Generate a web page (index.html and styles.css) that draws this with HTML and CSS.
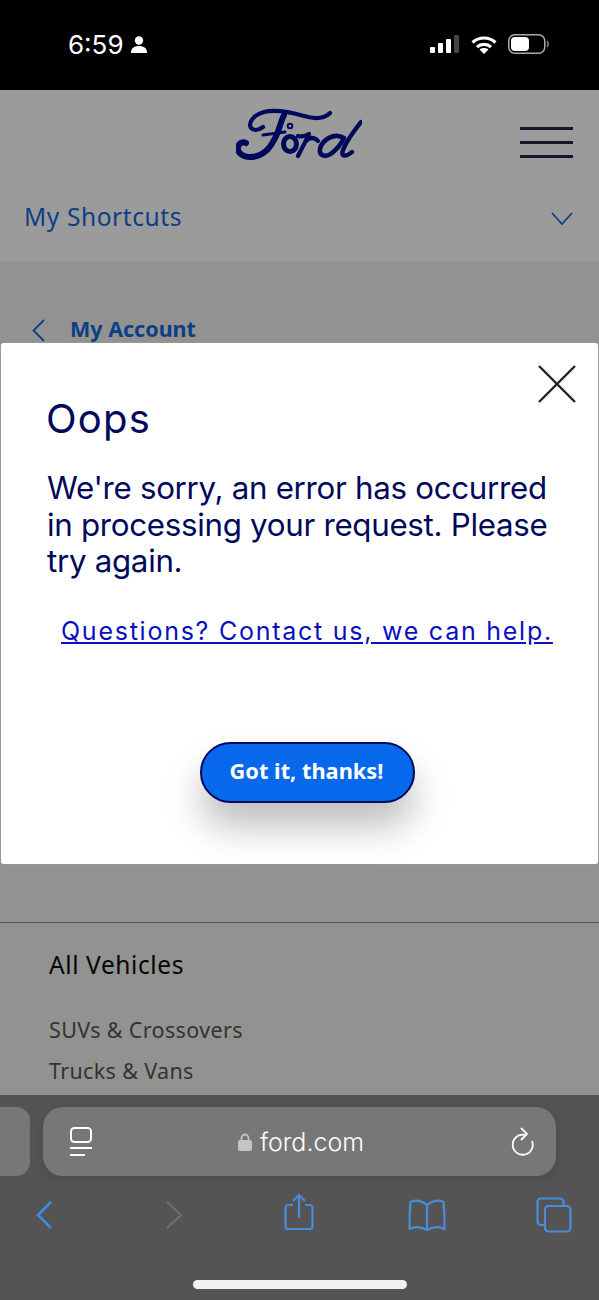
FILE: index.html
```html
<!DOCTYPE html>
<html lang="en">
<head>
<meta charset="utf-8">
<title>Ford - Oops</title>
<link rel="stylesheet" href="styles.css">
</head>
<body>
<div class="phone">
  <div class="status">
    <div class="status-left">
      <span class="time">6:59</span>
      <svg class="person" viewBox="0 0 16 17"><circle cx="8" cy="4.500" r="4.200" fill="#fff"/><path d="M0 17c0-5 3-7 8-7s8 2 8 7z" fill="#fff"/></svg>
    </div>
    <div class="status-right">
      <svg class="signal" viewBox="0 0 29 18"><rect x="0" y="12" width="5" height="6" rx="1" fill="#fff"/><rect x="8" y="8" width="5" height="10" rx="1" fill="#fff"/><rect x="16" y="4" width="5" height="14" rx="1" fill="#fff"/><rect x="24" y="0" width="5" height="18" rx="1" fill="#444"/></svg>
      <svg class="wifi" viewBox="0 0 26 19" fill="none" stroke="#fff" stroke-width="3.200"><path d="M1.500 7.500c6.500-6 16.500-6 23 0"/><path d="M6 12c4-3.600 10-3.600 14 0"/><path d="M13 19l-4.500-4.500c2.500-2 6.500-2 9 0z" fill="#fff" stroke="none"/></svg>
      <svg class="battery" viewBox="0 0 41 20" fill="none"><rect x="0.750" y="0.750" width="36" height="18.500" rx="6" stroke="#aaa" stroke-width="1.500"/><rect x="3" y="3" width="18" height="14" rx="4" fill="#fff"/><path d="M39 7c1.500 1 1.500 5 0 6" stroke="#888" stroke-width="1.500"/></svg>
    </div>
  </div>

  <header class="site-header">
    <div class="logo-row">
      <svg class="ford-logo" viewBox="0 0 126 52" fill="none" stroke="#00095b" stroke-linecap="round" stroke-linejoin="round" aria-label="Ford">
        <path d="M94 5C88 11 78 11 68 8 54 4 40 1 28 4 17 7 12 15 15 20c3 3 8 2 12-1" stroke-width="4.200"/>
        <path d="M48 7C44 15 43 24 38 32 33 42 25 49 14 49 6 49 1 44 2 39c1-4 5-6 8-4" stroke-width="6"/>
        <path d="M27 27c7-1 15-2 22-3" stroke-width="3"/>
        <ellipse cx="54" cy="36" rx="6.500" ry="7.500" stroke-width="5"/>
        <circle cx="54" cy="18" r="2.300" stroke-width="2"/>
        <path d="M62 28c4 1 8 0 11-2-3 7-7 14-11 22M70 33c4-4 8-4 12 0" stroke-width="4.200"/>
        <path d="M108 30C98 24 86 32 84 41c-1 7 6 9 12 4 5-4 9-9 12-15z" stroke-width="4.600"/>
        <path d="M125 14c-8 10-15 20-18 28-2 6 1 8 9 2" stroke-width="4.400"/>
      </svg>
      <div class="burger"><span></span><span></span><span></span></div>
    </div>
    <div class="shortcuts">
      <span>My Shortcuts</span>
      <svg class="chev-down" viewBox="0 0 22 13" fill="none" stroke="#0d3f85" stroke-width="1.800"><path d="M1 1l10 11L21 1"/></svg>
    </div>
  </header>

  <main class="page">
    <div class="crumb">
      <svg class="chev-left" viewBox="0 0 13 23" fill="none" stroke="#0d3f85" stroke-width="1.800"><path d="M12 1L1.500 11.500 12 22"/></svg>
      <span>My Account</span>
    </div>
    <div class="spacer"></div>
    <section class="foot-links">
      <h2>All Vehicles</h2>
      <a>SUVs &amp; Crossovers</a>
      <a>Trucks &amp; Vans</a>
    </section>
  </main>

  <footer class="safari">
    <div class="tabs">
      <div class="tab-peek"></div>
      <div class="urlbar">
        <svg class="reader" viewBox="0 0 24 30" fill="none" stroke="#fff" stroke-width="2"><rect x="2" y="1" width="20" height="14" rx="3.500"/><path d="M1 21h22M1 28h15"/></svg>
        <div class="url"><svg class="lock" viewBox="0 0 14 18"><path d="M3.500 8V5a3.500 3.500 0 0 1 7 0v3" fill="none" stroke="#c4c4c6" stroke-width="1.800"/><rect y="7" width="14" height="11" rx="2" fill="#c4c4c6"/></svg><span>ford.com</span></div>
        <svg class="reload" viewBox="0 0 24 30" fill="none" stroke="#fff" stroke-width="1.800"><path d="M14 8A10 10 0 1 0 21 14"/><path d="M10 1l6 6-6 6"/></svg>
      </div>
    </div>
    <div class="tools">
      <svg class="t-back" viewBox="0 0 18 30" fill="none" stroke="#3e8ae6" stroke-width="2.600"><path d="M16 2L3 15l13 13"/></svg>
      <svg class="t-fwd" viewBox="0 0 18 30" fill="none" stroke="#6c6c6c" stroke-width="2.400"><path d="M2 2l14 13L2 28"/></svg>
      <svg class="t-share" viewBox="0 0 30 38" fill="none" stroke="#4a8bdc" stroke-width="2.200"><path d="M9 12H4a2.500 2.500 0 0 0-2.500 2.500v19A2.500 2.500 0 0 0 4 36h22a2.500 2.500 0 0 0 2.500-2.500v-19A2.500 2.500 0 0 0 26 12h-5"/><path d="M15 25V2M9 8l6-6 6 6"/></svg>
      <svg class="t-book" viewBox="0 0 38 32" fill="none" stroke="#4a8bdc" stroke-width="2.200" stroke-linejoin="round"><path d="M19 6C15 2 7 0 2.500 3 1.500 12 1.500 21 1.500 30c6-3 12-2 17.500 1 5.500-3 11.500-4 17.500-1 0-9 0-18-1-27C31 0 23 2 19 6zM19 6v25"/></svg>
      <svg class="t-tabs" viewBox="0 0 36 36" fill="none" stroke="#4a8bdc" stroke-width="2.200"><path d="M9 28H5a3.500 3.500 0 0 1-3.500-3.500V5A3.500 3.500 0 0 1 5 1.500h19A3.500 3.500 0 0 1 27.500 5v4"/><rect x="9" y="9" width="25.500" height="25.500" rx="3.500"/></svg>
    </div>
    <div class="home-bar"></div>
  </footer>

  <div class="modal">
    <button class="close" aria-label="Close"><svg viewBox="0 0 38 38" fill="none" stroke="#222" stroke-width="2.400"><path d="M1 1l36 36M37 1L1 37"/></svg></button>
    <h1>Oops</h1>
    <p>We're sorry, an error has occurred in processing your request. Please try again.</p>
    <a class="help">Questions? Contact us, we can help.</a>
    <button class="cta">Got it, thanks!</button>
  </div>
</div>
</body>
</html>
```
FILE: styles.css
```css
* { box-sizing: border-box; }
html, body { margin: 0; padding: 0; }
body { font-family: "Noto Sans", "Open Sans", sans-serif; background: #000; }
.phone { position: relative; width: 599px; height: 1300px; display: flex; flex-direction: column; overflow: hidden; background: #929291; }

.status { height: 90px; flex: none; background: #000; display: flex; justify-content: space-between; align-items: flex-start; padding: 27px 50px 0 68px; color: #fff; }
.status-left { display: flex; align-items: center; gap: 7px; height: 34px; }
.time { font-family: "Inter", "Liberation Sans", sans-serif; font-size: 26px; font-weight: 400; }
.person { width: 16px; height: 17px; margin-top: 1px; }
.status-right { display: flex; align-items: center; height: 34px; }
.signal { width: 29px; height: 18px; }
.wifi { width: 26px; height: 19px; margin-left: 12px; }
.battery { width: 41px; height: 20px; margin-left: 11px; }

.site-header { flex: none; height: 173px; background: #9b9b9b; border-bottom: 1px solid #8e8e8e; }
.logo-row { position: relative; height: 90px; display: flex; justify-content: center; padding: 18px 2px 0 0; }
.ford-logo { width: 126px; height: 52px; }
.burger { position: absolute; top: 37px; right: 26px; width: 53px; display: flex; flex-direction: column; gap: 11px; }
.burger span { display: block; height: 3px; background: #17172a; }
.shortcuts { display: flex; justify-content: space-between; align-items: center; padding: 20px 26px 0 24px; font-size: 24.500px; letter-spacing: .6px; color: #0d3f85; line-height: 34px; }
.chev-down { width: 22px; height: 13px; margin-top: 2px; }

.page { flex: 1; min-height: 0; overflow: hidden; display: flex; flex-direction: column; }
.crumb { display: flex; flex: none; align-items: center; padding: 51px 0 0 32px; font-size: 21.500px; font-weight: 700; color: #0d3f85; line-height: 30px; }
.chev-left { width: 13px; height: 23px; margin-right: 25px; margin-top: 2px; }
.spacer { height: 578px; flex: none; }
.foot-links { flex: none; border-top: 1px solid #555; padding: 25px 0 0 49px; display: flex; flex-direction: column; }
.foot-links h2 { margin: 0 0 33px; font-size: 24.500px; font-weight: 400; letter-spacing: .6px; line-height: 34px; color: #050505; }
.foot-links a { font-size: 21.500px; letter-spacing: .35px; line-height: 30px; color: #333; margin-bottom: 11px; }

.safari { flex: none; height: 205px; background: #545454; display: flex; flex-direction: column; overflow: hidden; }
.tabs { display: flex; gap: 13px; padding-top: 12px; height: 81px; flex: none; }
.tab-peek { width: 30px; height: 69px; background: #777; border-radius: 0 14px 14px 0; }
.urlbar { width: 513px; height: 69px; background: #777; border-radius: 20px; display: flex; align-items: center; justify-content: space-between; padding: 0 21px 0 26px; box-shadow: 0 2px 14px rgba(0,0,0,.12); }
.reader { width: 24px; height: 30px; }
.url { display: flex; align-items: center; gap: 8px; font-size: 25px; color: #fff; font-family: "Inter", "Liberation Sans", sans-serif; font-weight: 300; margin-left: -2px; }
.lock { width: 14px; height: 18px; }
.reload { width: 24px; height: 30px; }
.tools { height: 72px; flex: none; display: flex; align-items: center; padding: 6px 0 0 35px; }
.t-back, .t-fwd { width: 18px; height: 30px; }
.t-fwd { margin-left: 112px; }
.t-share { width: 30px; height: 38px; margin-left: 101px; margin-top: -6px; }
.t-book { width: 38px; height: 32px; margin-left: 94px; }
.t-tabs { width: 36px; height: 36px; margin-left: 90px; }
.home-bar { width: 214px; height: 9px; border-radius: 5px; background: #f2f2f2; margin: 32px auto 0; }

.modal { position: absolute; left: 1px; top: 343px; width: 597px; height: 521px; background: #fff; border-radius: 3px; padding: 54px 0 0 46px; color: #00095b; font-family: "Inter", "Noto Sans", sans-serif; display: flex; flex-direction: column; box-shadow: 0 0 1px #ccc; }
.close { position: absolute; top: 22px; right: 22px; width: 38px; height: 38px; border: 0; padding: 0; background: none; }
.close svg { display: block; width: 38px; height: 38px; }
.modal h1 { margin: 0 0 0 -1px; font-size: 40px; font-weight: 400; line-height: 44px; letter-spacing: 1.200px; }
.modal p { margin: 29px 0 0; width: 512px; font-size: 31.300px; line-height: 36.500px; letter-spacing: -.3px; }
.help { margin: 32px 0 0 14px; font-size: 25px; line-height: 38px; color: #0a0fbf; text-decoration: underline; letter-spacing: 1.750px; white-space: nowrap; }
.cta { align-self: flex-start; margin: 92px 0 0 153px; width: 215px; height: 61px; padding: 0 2px 3px 0; border-radius: 31px; background: #0768ec; border: 2px solid #00095b; color: #fff; font: 700 21.800px "Noto Sans", sans-serif; box-shadow: 0 24px 36px rgba(0,0,0,.25); }
```
